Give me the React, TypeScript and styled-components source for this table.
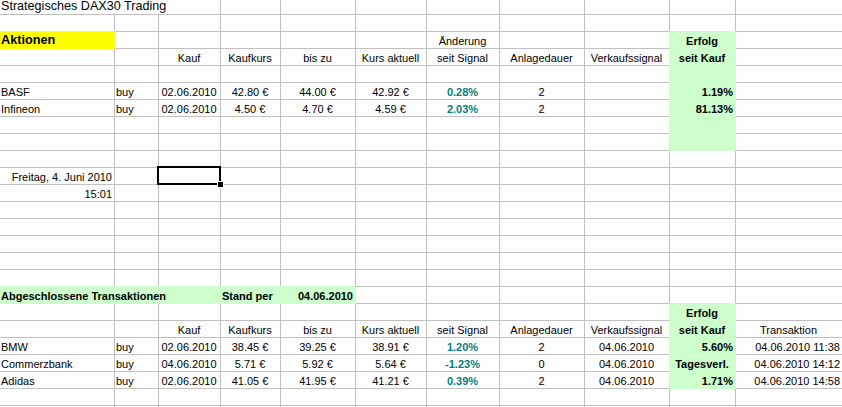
import React from "react";
import styled, { createGlobalStyle, css } from "styled-components";

const GRID = "#c0c0c0";
const FILLS = { y: "#ffff00", g: "#ccffcc" } as const;

type Fill = keyof typeof FILLS;
type Align = "l" | "c" | "r";

interface Spec {
  t?: string;
  a?: Align;
  b?: boolean;
  f?: Fill;
  teal?: boolean;
  span?: number;
  size?: "title" | "big";
  sel?: boolean;
}

const GlobalStyle = createGlobalStyle`
  html, body {
    margin: 0;
    padding: 0;
    background: #ffffff;
    overflow: hidden;
  }
  body {
    font-family: "Liberation Sans", Arial, sans-serif;
    color: #000000;
  }
`;

const Sheet = styled.div`
  display: grid;
  grid-template-columns: 115px 44px 62px 60px 75px 71px 73px 85px 85px 66px 1fr;
  grid-auto-rows: 17px;
  width: 842px;
  margin-top: -2px;
`;

const justify = { l: "flex-start", c: "center", r: "flex-end" };

const Cell = styled.div<{
  $align: Align;
  $fill?: Fill;
  $bold?: boolean;
  $teal?: boolean;
  $span: number;
  $size?: "title" | "big";
  $edge?: boolean;
  $sel?: boolean;
}>`
  box-sizing: border-box;
  grid-column: span ${(p) => p.$span};
  display: flex;
  align-items: flex-end;
  justify-content: ${(p) => justify[p.$align]};
  padding: 0 2px 0 1px;
  border-right: 1px solid ${GRID};
  border-bottom: 1px solid ${GRID};
  font-size: 11px;
  line-height: 13px;
  white-space: nowrap;
  font-weight: ${(p) => (p.$bold ? 700 : 400)};
  color: ${(p) => (p.$teal ? "#008080" : "#000000")};
  ${(p) =>
    p.$size === "title" &&
    css`
      font-size: 12.6px;
      line-height: 15px;
    `}
  ${(p) =>
    p.$size === "big" &&
    css`
      font-size: 12.7px;
      line-height: 15px;
    `}
  ${(p) =>
    p.$fill &&
    css`
      background: ${FILLS[p.$fill]};
      border-color: ${FILLS[p.$fill]};
      box-shadow: -1px 0 0 ${FILLS[p.$fill]}, 0 -1px 0 ${FILLS[p.$fill]},
        -1px -1px 0 ${FILLS[p.$fill]};
    `}
  ${(p) =>
    p.$edge &&
    css`
      border-right: none;
    `}
  ${(p) =>
    p.$sel &&
    css`
      position: relative;
      z-index: 2;
    `}
`;

const SelectionFrame = styled.div`
  position: absolute;
  top: -2px;
  left: -2px;
  right: -1px;
  bottom: -1px;
  border: 2px solid #000000;
  pointer-events: none;
`;

const FillHandle = styled.div`
  position: absolute;
  left: 58px;
  top: 13px;
  width: 5px;
  height: 5px;
  background: #000000;
  border: 1px solid #ffffff;
`;

const E: Spec = {};
const G: Spec = { f: "g" };
const c = (t: string): Spec => ({ t, a: "c" });
const l = (t: string): Spec => ({ t, a: "l" });
const pct = (t: string): Spec => ({ t, a: "c", b: true, teal: true });
const win = (t: string): Spec => ({ t, a: "r", b: true, f: "g" });
const empties = (n: number): Spec[] => Array.from({ length: n }, () => E);

const headers = [
  c("Kauf"),
  c("Kaufkurs"),
  c("bis zu"),
  c("Kurs aktuell"),
  c("seit Signal"),
  c("Anlagedauer"),
  c("Verkaufssignal"),
  { t: "seit Kauf", a: "c", b: true, f: "g" } as Spec,
];

const openRow = (name: string, d: string, k: string, bis: string, akt: string, p: string, dauer: string, erf: string): Spec[] => [
  l(name), l("buy"), c(d), c(k), c(bis), c(akt), pct(p), c(dauer), E, win(erf), E,
];

const closedRow = (name: string, d: string, k: string, bis: string, akt: string, p: string, dauer: string, erf: Spec, tx: string): Spec[] => [
  l(name), l("buy"), c(d), c(k), c(bis), c(akt), pct(p), c(dauer), c("04.06.2010"), erf, { t: tx, a: "r" },
];

const rows: Spec[][] = [
  [{ t: "Strategisches DAX30 Trading", span: 3, size: "title" }, ...empties(8)],
  empties(11),
  [
    { t: "Aktionen", b: true, size: "big", f: "y" },
    ...empties(5),
    c("Änderung"),
    E,
    E,
    { t: "Erfolg", a: "c", b: true, f: "g" },
    E,
  ],
  [E, E, ...headers, E],
  [...empties(9), G, E],
  openRow("BASF", "02.06.2010", "42.80 €", "44.00 €", "42.92 €", "0.28%", "2", "1.19%"),
  openRow("Infineon", "02.06.2010", "4.50 €", "4.70 €", "4.59 €", "2.03%", "2", "81.13%"),
  [...empties(9), G, E],
  [...empties(9), G, E],
  empties(11),
  [{ t: "Freitag, 4. Juni 2010", a: "r" }, E, { sel: true }, ...empties(8)],
  [{ t: "15:01", a: "r" }, ...empties(10)],
  empties(11),
  empties(11),
  empties(11),
  empties(11),
  empties(11),
  [
    { t: "Abgeschlossene Transaktionen", b: true, span: 3, f: "g" },
    { t: "Stand per", b: true, f: "g" },
    { t: "04.06.2010", b: true, a: "r", f: "g" },
    ...empties(6),
  ],
  [...empties(9), { t: "Erfolg", a: "c", b: true, f: "g" }, E],
  [E, E, ...headers, c("Transaktion")],
  closedRow("BMW", "02.06.2010", "38.45 €", "39.25 €", "38.91 €", "1.20%", "2", win("5.60%"), "04.06.2010 11:38"),
  closedRow("Commerzbank", "04.06.2010", "5.71 €", "5.92 €", "5.64 €", "-1.23%", "0", { t: "Tagesverl.", a: "c", b: true, f: "g" }, "04.06.2010 14:12"),
  closedRow("Adidas", "02.06.2010", "41.05 €", "41.95 €", "41.21 €", "0.39%", "2", win("1.71%"), "04.06.2010 14:58"),
  empties(11),
  empties(11),
];

export default function App() {
  return (
    <>
      <GlobalStyle />
      <Sheet>
        {rows.map((row, ri) => {
          let col = 0;
          return row.map((s, ci) => {
            const span = s.span ?? 1;
            col += span;
            return (
              <Cell
                key={`${ri}-${ci}`}
                $align={s.a ?? "l"}
                $fill={s.f}
                $bold={s.b}
                $teal={s.teal}
                $span={span}
                $size={s.size}
                $edge={col === 11}
                $sel={s.sel}
              >
                {s.t}
                {s.sel && (
                  <>
                    <SelectionFrame />
                    <FillHandle />
                  </>
                )}
              </Cell>
            );
          });
        })}
      </Sheet>
    </>
  );
}
